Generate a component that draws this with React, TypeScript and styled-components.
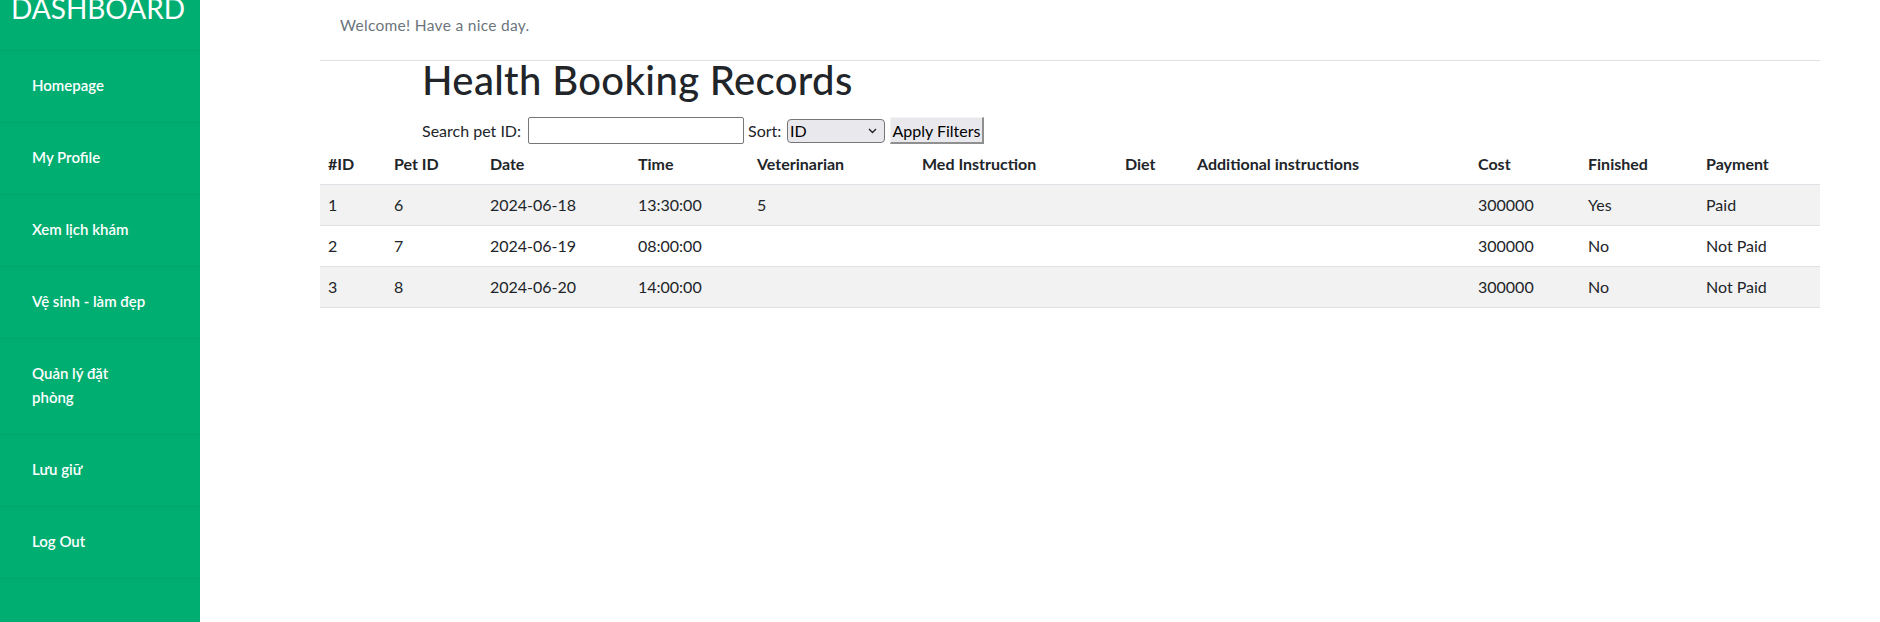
import React from "react";
import styled, { createGlobalStyle } from "styled-components";

const GlobalStyle = createGlobalStyle`
  html, body {
    margin: 0;
    padding: 0;
    background: #ffffff;
    font-family: Lato, "Noto Sans", sans-serif;
    color: #212529;
  }
  * { box-sizing: border-box; }
`;

const Layout = styled.div`
  display: flex;
  width: 100%;
  min-height: 100vh;
`;

const Sidebar = styled.aside`
  width: 200px;
  flex: 0 0 200px;
  min-height: 100vh;
  background: #01ae72;
  display: flex;
  flex-direction: column;
`;

const Brand = styled.div`
  height: 51px;
  padding-left: 11px;
  border-bottom: 1px solid rgba(0, 0, 0, 0.05);
`;

const BrandTitle = styled.div`
  margin-top: -6px;
  font-size: 28px;
  line-height: 28px;
  font-weight: 400;
  color: #ffffff;
`;

const NavItem = styled.a`
  display: block;
  padding: 22px 20px 25px 32px;
  line-height: 24px;
  font-size: 15px;
  font-weight: 600;
  color: #ffffff;
  text-decoration: none;
  white-space: pre-line;
  border-bottom: 1px solid rgba(0, 0, 0, 0.05);
`;

const Main = styled.main`
  flex: 1;
  padding: 0 60px 0 120px;
`;

const TopBar = styled.div`
  height: 61px;
  padding: 13px 0 0 20px;
  border-bottom: 1px solid #dee2e6;
  font-size: 15.5px;
  letter-spacing: 0.3px;
  line-height: 24px;
  color: #6c757d;
`;

const Head = styled.div`
  padding-left: 102px;
`;

const Title = styled.h1`
  margin: 0 0 18px 0;
  font-size: 40px;
  line-height: 38px;
  font-weight: 500;
  letter-spacing: 0.35px;
  color: #212529;
`;

const FilterRow = styled.div`
  display: flex;
  align-items: center;
  height: 27px;
  font-size: 16px;
`;

const Label = styled.span<{ $w: number; $ml?: number }>`
  display: inline-block;
  width: ${(p) => p.$w}px;
  margin-left: ${(p) => p.$ml ?? 0}px;
  white-space: nowrap;
  color: #212529;
`;

const SearchInput = styled.input`
  width: 216px;
  height: 27px;
  border: 1px solid #767676;
  border-radius: 2px;
  background: #fff;
  padding: 0 4px;
  font: inherit;
`;

const SelectWrap = styled.div`
  position: relative;
  width: 98px;
  height: 24px;
`;

const Select = styled.select`
  appearance: none;
  width: 98px;
  height: 24px;
  border: 1px solid #767676;
  border-radius: 4px;
  background: #e9e9ed;
  color: #000;
  font-family: Lato, sans-serif;
  font-size: 16px;
  padding: 0 0 0 2px;
  margin: 0;
`;

const Chevron = styled.svg`
  position: absolute;
  right: 8px;
  top: 9px;
  pointer-events: none;
`;

const ApplyButton = styled.button`
  margin-left: 5px;
  width: 94px;
  height: 27px;
  padding: 0;
  font-family: Lato, sans-serif;
  font-size: 16px;
  color: #000;
  background: #e9e9ed;
  border-style: solid;
  border-width: 1px 2px 2px 1px;
  border-color: #f4f4f4 #8f8f8f #8f8f8f #f4f4f4;
`;

const Table = styled.table`
  width: 1500px;
  table-layout: fixed;
  border-collapse: collapse;
  font-size: 16px;
  line-height: 24px;
  color: #212529;
`;

const Th = styled.th`
  text-align: left;
  font-weight: 700;
  padding: 8px;
  border-bottom: 1px solid #dee2e6;
  white-space: nowrap;
`;

const Row = styled.tr<{ $striped: boolean }>`
  background: ${(p) => (p.$striped ? "#f2f2f2" : "#ffffff")};
`;

const Td = styled.td`
  padding: 8px;
  border-bottom: 1px solid #dee2e6;
  white-space: nowrap;
`;

const navItems = [
  "Homepage",
  "My Profile",
  "Xem lịch khám",
  "Vệ sinh - làm đẹp",
  "Quản lý đặt\nphòng",
  "Lưu giữ",
  "Log Out",
];

const columns: { label: string; width: number }[] = [
  { label: "#ID", width: 66 },
  { label: "Pet ID", width: 96 },
  { label: "Date", width: 148 },
  { label: "Time", width: 119 },
  { label: "Veterinarian", width: 165 },
  { label: "Med Instruction", width: 203 },
  { label: "Diet", width: 72 },
  { label: "Additional instructions", width: 281 },
  { label: "Cost", width: 110 },
  { label: "Finished", width: 118 },
  { label: "Payment", width: 122 },
];

const rows: string[][] = [
  ["1", "6", "2024-06-18", "13:30:00", "5", "", "", "", "300000", "Yes", "Paid"],
  ["2", "7", "2024-06-19", "08:00:00", "", "", "", "", "300000", "No", "Not Paid"],
  ["3", "8", "2024-06-20", "14:00:00", "", "", "", "", "300000", "No", "Not Paid"],
];

export default function App() {
  return (
    <>
      <GlobalStyle />
      <Layout>
        <Sidebar>
          <Brand>
            <BrandTitle>DASHBOARD</BrandTitle>
          </Brand>
          {navItems.map((item) => (
            <NavItem key={item} href="#">
              {item}
            </NavItem>
          ))}
        </Sidebar>
        <Main>
          <TopBar>Welcome! Have a nice day.</TopBar>
          <Head>
            <Title>Health Booking Records</Title>
            <FilterRow>
              <Label $w={106}>Search pet ID:</Label>
              <SearchInput type="text" />
              <Label $w={39} $ml={4}>
                Sort:
              </Label>
              <SelectWrap>
                <Select defaultValue="id">
                  <option value="id">ID</option>
                  <option value="date">Date</option>
                </Select>
                <Chevron width="9" height="6" viewBox="0 0 9 6">
                  <path d="M1 1 L4.5 4.5 L8 1" fill="none" stroke="#222" strokeWidth="1.4" />
                </Chevron>
              </SelectWrap>
              <ApplyButton type="button">Apply Filters</ApplyButton>
            </FilterRow>
          </Head>
          <Table>
            <colgroup>
              {columns.map((c) => (
                <col key={c.label} style={{ width: c.width }} />
              ))}
            </colgroup>
            <thead>
              <tr>
                {columns.map((c) => (
                  <Th key={c.label}>{c.label}</Th>
                ))}
              </tr>
            </thead>
            <tbody>
              {rows.map((r, i) => (
                <Row key={i} $striped={i % 2 === 0}>
                  {r.map((cell, j) => (
                    <Td key={j}>{cell}</Td>
                  ))}
                </Row>
              ))}
            </tbody>
          </Table>
        </Main>
      </Layout>
    </>
  );
}
